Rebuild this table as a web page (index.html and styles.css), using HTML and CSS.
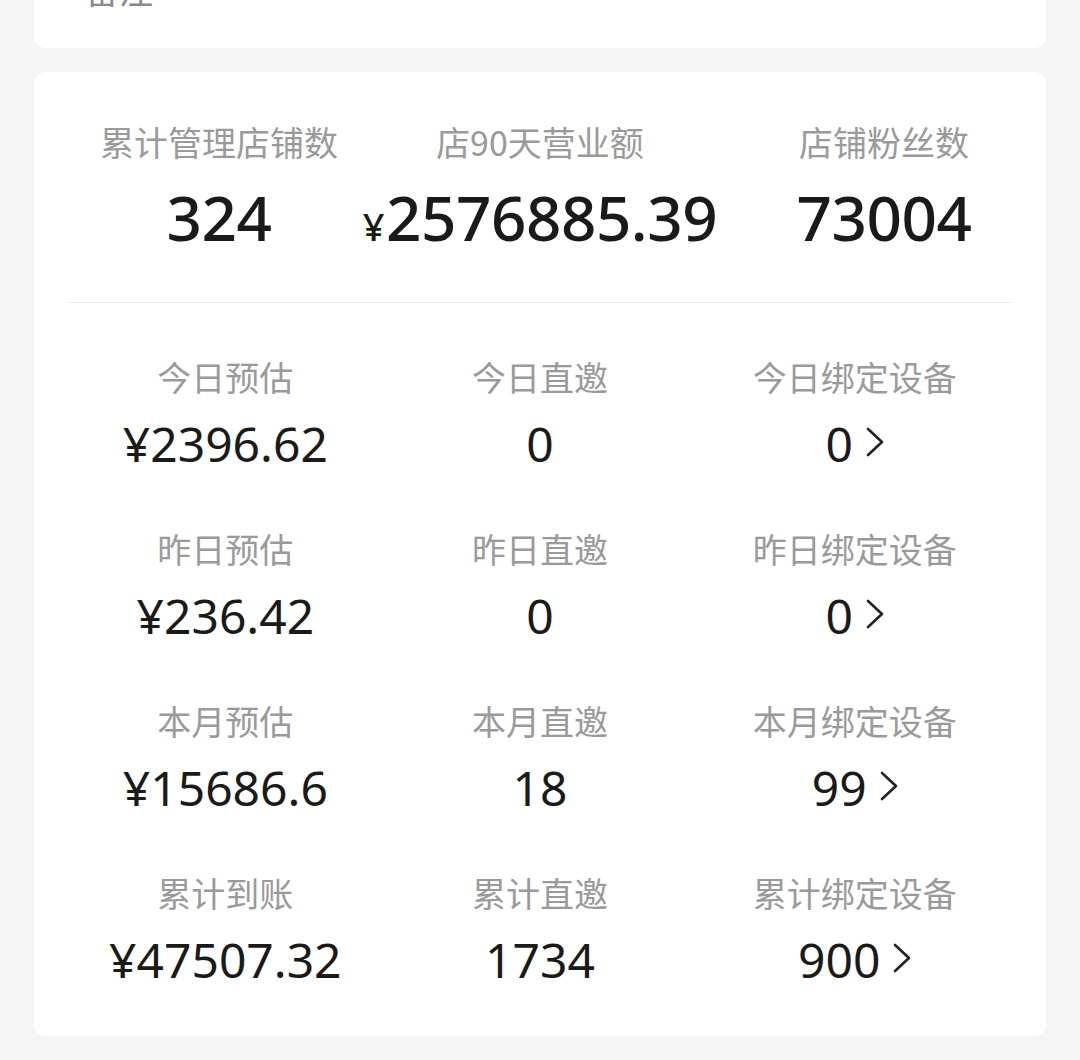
FILE: index.html
```html
<!DOCTYPE html>
<html lang="zh-CN">
<head>
<meta charset="utf-8">
<link rel="stylesheet" href="styles.css">
</head>
<body>
<div class="page">
  <section class="card card-top">
    <div class="note-label">备注</div>
  </section>

  <section class="card card-stats">
    <div class="summary">
      <div class="sum-item sum-1">
        <div class="label">累计管理店铺数</div>
        <div class="big">324</div>
      </div>
      <div class="sum-item sum-2">
        <div class="label">店90天营业额</div>
        <div class="big"><span class="yen-small">¥</span>2576885.39</div>
      </div>
      <div class="sum-item sum-3">
        <div class="label">店铺粉丝数</div>
        <div class="big">73004</div>
      </div>
    </div>

    <div class="divider"></div>

    <div class="grid">
      <div class="cell"><div class="label">今日预估</div><div class="val">¥2396.62</div></div>
      <div class="cell"><div class="label">今日直邀</div><div class="val">0</div></div>
      <div class="cell"><div class="label">今日绑定设备</div><div class="val">0<svg class="chev" viewBox="0 0 18 30"><path d="M2 2 L16 15 L2 28"/></svg></div></div>

      <div class="cell"><div class="label">昨日预估</div><div class="val">¥236.42</div></div>
      <div class="cell"><div class="label">昨日直邀</div><div class="val">0</div></div>
      <div class="cell"><div class="label">昨日绑定设备</div><div class="val">0<svg class="chev" viewBox="0 0 18 30"><path d="M2 2 L16 15 L2 28"/></svg></div></div>

      <div class="cell"><div class="label">本月预估</div><div class="val">¥15686.6</div></div>
      <div class="cell"><div class="label">本月直邀</div><div class="val">18</div></div>
      <div class="cell"><div class="label">本月绑定设备</div><div class="val">99<svg class="chev" viewBox="0 0 18 30"><path d="M2 2 L16 15 L2 28"/></svg></div></div>

      <div class="cell"><div class="label">累计到账</div><div class="val">¥47507.32</div></div>
      <div class="cell"><div class="label">累计直邀</div><div class="val">1734</div></div>
      <div class="cell"><div class="label">累计绑定设备</div><div class="val">900<svg class="chev" viewBox="0 0 18 30"><path d="M2 2 L16 15 L2 28"/></svg></div></div>
    </div>
  </section>
</div>
</body>
</html>
```

FILE: styles.css
```css
* { box-sizing: border-box; }

html, body {
  margin: 0;
  padding: 0;
  background: #f5f5f5;
}

body {
  font-family: "Noto Sans", "Noto Sans CJK SC", sans-serif;
  color: #1a1a1a;
  overflow: hidden;
}

.page {
  display: flex;
  flex-direction: column;
  gap: 24px;
  padding: 0 34px;
}

.card {
  background: #ffffff;
  border-radius: 12px;
}

.card-top {
  margin-top: -34px;
  padding: 0 51px 34px;
  border-radius: 0 0 12px 12px;
}

.note-label {
  font-family: "Noto Sans CJK SC", sans-serif;
  font-size: 34px;
  line-height: 48px;
  color: #8a8a8a;
}

.card-stats {
  padding: 46px 34px 46px;
}

.label {
  font-family: "Noto Sans CJK SC", sans-serif;
  font-size: 34px;
  line-height: 48px;
  color: #9a9a9a;
  white-space: nowrap;
}

.summary {
  display: flex;
}

.sum-item {
  display: flex;
  flex-direction: column;
  align-items: center;
  gap: 13px;
}

.sum-1 { width: 302px; }
.sum-2 { width: 340px; }
.sum-3 { width: 256px; margin-left: auto; }

.big {
  height: 76px;
  font-size: 62px;
  line-height: 76px;
  font-weight: 500;
  color: #1a1a1a;
  white-space: nowrap;
  letter-spacing: -0.5px;
}

.yen-small {
  font-size: 38px;
  line-height: 1;
  font-weight: 500;
  margin-right: 2px;
}

.divider {
  height: 1px;
  background: #ececec;
  margin: 47px 0 50px;
}

.grid {
  display: grid;
  grid-template-columns: repeat(3, 1fr);
  row-gap: 51px;
}

.cell {
  display: flex;
  flex-direction: column;
  align-items: center;
  gap: 13px;
}

.val {
  display: flex;
  align-items: center;
  height: 60px;
  font-size: 48px;
  line-height: 60px;
  font-weight: 400;
  color: #1a1a1a;
  white-space: nowrap;
}

.chev {
  width: 18px;
  height: 30px;
  margin-left: 13px;
  margin-top: -4px;
}

.chev path {
  fill: none;
  stroke: #222222;
  stroke-width: 2.6;
  stroke-linecap: round;
  stroke-linejoin: round;
}
```
